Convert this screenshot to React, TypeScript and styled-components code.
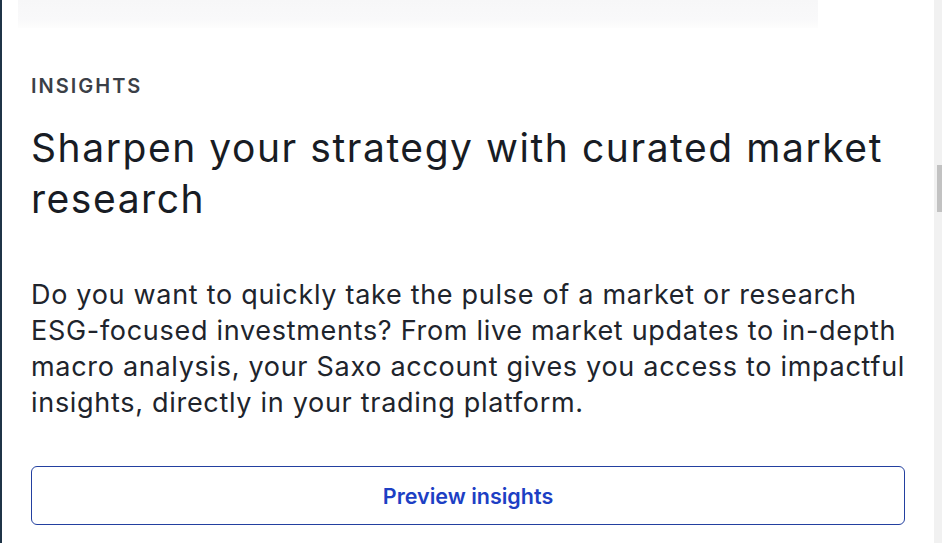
import styled, { createGlobalStyle } from "styled-components";

const GlobalStyle = createGlobalStyle`
  html, body {
    margin: 0;
    padding: 0;
    background: #ffffff;
  }
  body {
    font-family: Inter, "Noto Sans", "Liberation Sans", sans-serif;
    overflow: hidden;
  }
`

const Page = styled.div`
  display: flex;
  width: 942px;
  height: 543px;
  overflow: hidden;
  border-left: 2px solid #1f3447;
  box-sizing: border-box;
  background: #ffffff;
`

const Main = styled.main`
  flex: 1;
  display: flex;
  flex-direction: column;
  padding: 0 24px 0 29px;
`

const FadedImage = styled.div`
  width: 800px;
  height: 28px;
  margin-left: -13px;
  background: linear-gradient(180deg, #f7f7f8 0%, #f9f9fa 70%, #fdfdfd 100%);
`

const Eyebrow = styled.div`
  margin-top: 46px;
  font-size: 20px;
  font-weight: 600;
  letter-spacing: 2px;
  color: #3b3f47;
  line-height: 24px;
`

const Title = styled.h2`
  margin: 24px 0 0;
  font-size: 39px;
  font-weight: 400;
  line-height: 51px;
  color: #181c24;
  letter-spacing: 1.55px;
`

const Text = styled.p`
  margin: 53px 0 0;
  font-size: 27px;
  line-height: 36px;
  font-weight: 400;
  color: #20242c;
  letter-spacing: 0.7px;
`

const Button = styled.button`
  margin-top: 45px;
  width: 874px;
  height: 59px;
  border: 1px solid #2340a0;
  border-radius: 6px;
  background: #ffffff;
  color: #1d3fc4;
  font-family: inherit;
  font-size: 21.5px;
  font-weight: 600;
  cursor: pointer;
`

const Scrollbar = styled.div`
  width: 8px;
  background: #f1f1f1;
  display: flex;
  justify-content: flex-end;
`

const Thumb = styled.div`
  margin-top: 165px;
  width: 5px;
  height: 47px;
  background: #c2c2c2;
`

export default function App() {
    return (
        <>
            <GlobalStyle/>
            <Page>
                <Main>
                    <FadedImage/>
                    <Eyebrow>INSIGHTS</Eyebrow>
                    <Title>Sharpen your strategy with curated market research</Title>
                    <Text>
                        Do you want to quickly take the pulse of a market or research ESG-focused investments? From live
                        market updates to in-depth macro analysis, your Saxo account gives you access to impactful
                        insights, directly in your trading platform.
                    </Text>
                    <Button>Preview insights</Button>
                </Main>
                <Scrollbar>
                    <Thumb/>
                </Scrollbar>
            </Page>
        </>
    );
}
